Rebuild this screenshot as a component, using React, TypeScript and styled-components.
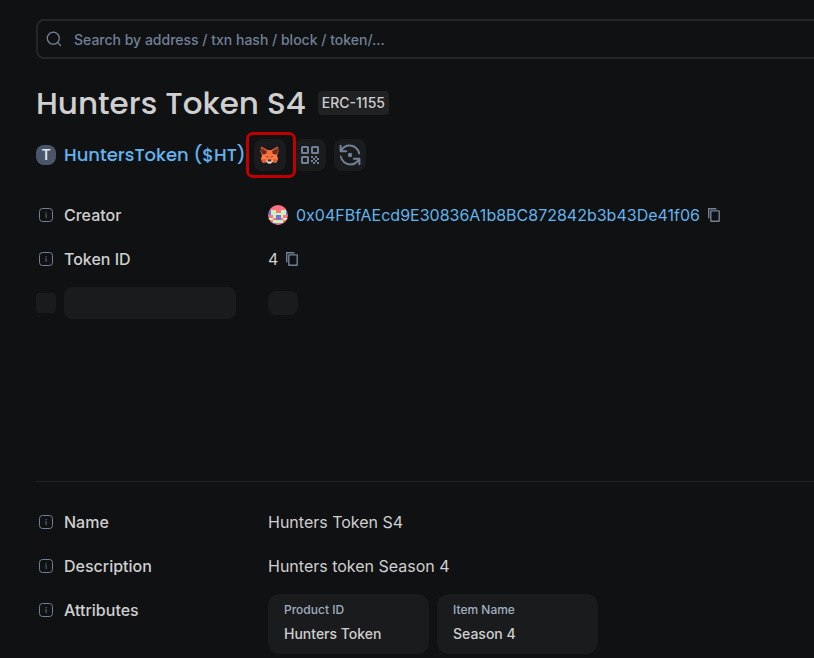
import React from 'react';
import styled, { createGlobalStyle } from 'styled-components';

const color = {
  page: '#101112',
  text: '#cfcfd0',
  muted: '#718096',
  link: '#63b3ed',
  panel: '#1a1b1c',
  line: '#212223',
  badge: '#202123',
};

const GlobalStyle = createGlobalStyle`
  * { box-sizing: border-box; }
  body {
    margin: 0;
    background: ${color.page};
    color: ${color.text};
    font-family: Inter, "Liberation Sans", sans-serif;
    font-size: 16px;
    line-height: 24px;
    font-weight: 400;
  }
  a { color: ${color.link}; text-decoration: none; }
  button { border: 0; padding: 0; background: none; color: ${color.muted}; cursor: pointer; }
  svg { display: block; flex: none; }
  h1, dl, dd, dt { margin: 0; }
`;

const Page = styled.main`
  padding: 19px 0 0 36px;
  overflow-x: hidden;
`;

const SearchBar = styled.label`
  display: flex;
  align-items: center;
  gap: 12px;
  height: 40px;
  padding-left: 8px;
  border: 2px solid #252627;
  border-right: 0;
  border-radius: 8px 0 0 8px;
  color: ${color.muted};
`;

const SearchInput = styled.input`
  flex: 1;
  min-width: 0;
  padding: 2px 0 0;
  border: 0;
  outline: 0;
  background: none;
  color: ${color.text};
  font: inherit;
  font-size: 14px;
  font-weight: 500;
  &::placeholder { color: ${color.muted}; opacity: 1; }
`;

const TitleRow = styled.div`
  display: flex;
  align-items: center;
  gap: 12px;
  margin-top: 24px;
`;

const Title = styled.h1`
  font-family: Poppins, Inter, sans-serif;
  font-size: 31px;
  line-height: 40px;
  font-weight: 500;
`;

const Badge = styled.span`
  padding: 0 4px;
  border-radius: 4px;
  background: ${color.badge};
  font-size: 14px;
  font-weight: 500;
`;

const TokenRow = styled.div`
  display: flex;
  align-items: center;
  gap: 8px;
  margin: 16px 0 28px;
`;

const TokenMark = styled.span`
  width: 20px;
  height: 20px;
  border-radius: 8px;
  background: #4a5568;
  color: #e2e8f0;
  font-size: 14px;
  line-height: 20px;
  font-weight: 600;
  text-align: center;
`;

const TokenLink = styled.a`
  font-family: Poppins, Inter, sans-serif;
  font-size: 18px;
  font-weight: 500;
`;

const ToolButton = styled.button`
  position: relative;
  display: grid;
  place-items: center;
  width: 32px;
  height: 32px;
  border-radius: 8px;
  background: ${color.panel};
`;

const Highlight = styled.span`
  position: absolute;
  z-index: 1;
  inset: -7px -10px -7px -8px;
  border: 3px solid #c00000;
  border-radius: 7px;
  pointer-events: none;
`;

const Details = styled.dl<{ $reserve?: number }>`
  display: grid;
  align-content: start;
  gap: 12px;
  min-height: ${({ $reserve }) => ($reserve ? `${$reserve}px` : 'auto')};
`;

const Row = styled.div`
  display: grid;
  grid-template-columns: 200px 1fr;
  column-gap: 32px;
`;

const Term = styled.dt`
  display: flex;
  align-items: center;
  gap: 8px;
  height: 32px;
  font-weight: 500;
`;

const Value = styled.dd`
  display: flex;
  align-items: center;
  gap: 8px;
  min-height: 32px;
`;

const Skeleton = styled.span<{ $w: number; $h: number; $r: number }>`
  width: ${({ $w }) => $w}px;
  height: ${({ $h }) => $h}px;
  border-radius: ${({ $r }) => $r}px;
  background: ${color.panel};
`;

const Divider = styled.hr`
  height: 1px;
  margin: 0 0 24px;
  border: 0;
  background: ${color.line};
`;

const Cards = styled.dd`
  display: grid;
  grid-template-columns: repeat(auto-fill, 161px);
  gap: 8px;
`;

const Card = styled.div`
  height: 60px;
  padding: 8px 16px;
  border-radius: 12px;
  background: ${color.panel};
`;

const CardLabel = styled.div`
  color: #a0aec0;
  font-size: 12px;
  line-height: 16px;
  font-weight: 500;
`;

const CardValue = styled.div`
  margin-top: 4px;
  font-size: 14px;
  line-height: 24px;
  font-weight: 500;
`;

const SearchIcon = () => (
  <svg width="16" height="16" viewBox="0 0 16 16" fill="none" stroke="currentColor" strokeWidth="1.3" strokeLinecap="round" aria-hidden="true">
    <circle cx="7.3" cy="7.2" r="6" />
    <path d="M11.7 11.6 14.6 14.5" />
  </svg>
);

const InfoIcon = () => (
  <svg width="20" height="20" viewBox="0 0 20 20" aria-hidden="true">
    <rect x="3.5" y="3.5" width="13" height="13" rx="3" fill="none" stroke={color.muted} />
    <path d="M9.5 7h1.2v1.3H9.5zM9 9.2h1.7V13H9.6V10H9z" fill={color.muted} opacity="0.75" />
  </svg>
);

const CopyIcon = () => (
  <svg width="12" height="16" viewBox="0 0 12 16" fill="none" stroke={color.muted} strokeWidth="1.4" aria-hidden="true">
    <path d="M.7 11.3V1.7H8.4" />
    <rect x="2.8" y="3.9" width="8.4" height="10.4" rx=".4" />
  </svg>
);

const CopyButton = ({ what }: { what: string }) => (
  <button type="button" aria-label={`Copy ${what}`}><CopyIcon /></button>
);

const FoxIcon = () => (
  <svg width="19" height="18" viewBox="0 0 38 36" aria-hidden="true">
    <path d="M2 1 15 8h8L36 1l1 10-3 8 2 8-4 7-7-2-3 3h-6l-3-3-7 2-4-7 2-8-3-8z" fill="#f4703a" />
    <path d="M3 3 14 10l-2 7-7 0-3-6zM35 3 24 10l2 7 7 0 3-6z" fill="#6b2a22" />
    <path d="m2 1 13 7-1 3L4 5zM36 1 23 8l1 3 10-6z" fill="#e2502c" />
    <path d="m5 18 9-2 3 9-5 4-10-2zM33 18l-9-2-3 9 5 4 10-2z" fill="#ff7d42" />
    <path d="m2 27 9-1 3 6-8 2zM36 27l-9-1-3 6 8 2z" fill="#e8592f" />
    <path d="m10 20 6 1-1 2zM28 20l-6 1 1 2z" fill="#5a2a26" />
    <path d="m12 28 4 1h6l4-1-1 4-4 3h-4l-4-3z" fill="#e4dbd5" />
    <path d="M16 27h6l1 4h-8z" fill="#4a3232" />
  </svg>
);

const QrIcon = () => (
  <svg width="18" height="18" viewBox="0 0 18 18" aria-hidden="true">
    <g fill="none" stroke={color.muted} strokeWidth="2">
      <rect x="1" y="1" width="6" height="6" rx=".5" />
      <rect x="11" y="1" width="6" height="6" rx=".5" />
      <rect x="1" y="11" width="6" height="6" rx=".5" />
    </g>
    <path d="M10 10h2v2h-2zM14 10h2v2h-2zM12 12h2v2h-2zM16 12h2v2h-2zM10 14h2v2h-2zM14 14h2v2h-2zM12 16h2v2h-2zM16 16h2v2h-2z" fill={color.muted} />
  </svg>
);

const RefreshIcon = () => (
  <svg width="22" height="22" viewBox="0 0 22 22" fill="none" stroke={color.muted} strokeWidth="2" strokeLinecap="round" strokeLinejoin="round" aria-hidden="true">
    <path d="M1.6 1.8v5.4h5.6M2.2 6.8C3.8 3.6 7 1.6 10.6 1.6c4.8 0 8.6 3.4 9.6 7.8" />
    <path d="M20.4 20.2v-5.4h-5.6M19.8 15.2c-1.6 3.2-4.8 5.2-8.4 5.2-4.8 0-8.6-3.4-9.6-7.8" />
    <circle cx="11" cy="11" r="2.2" fill={color.muted} stroke="none" />
  </svg>
);

const identicon = [
  'pppppppp',
  'pppppppp',
  'vggppggv',
  'vggggggv',
  'ppgvvgpp',
  'ggpvvpgg',
  'ppggggpp',
  'ppvppvpp',
];
const identiconFill: Record<string, string> = { p: '#ff7480', g: '#c9f2bd', v: '#7d6fd6' };

const Identicon = () => (
  <svg width="20" height="20" viewBox="0 0 8 8" shapeRendering="crispEdges" aria-hidden="true">
    <clipPath id="avatar"><circle cx="4" cy="4" r="4" /></clipPath>
    <g clipPath="url(#avatar)">
      {identicon.flatMap((line, y) =>
        line.split('').map((cell, x) => (
          <rect key={`${x}-${y}`} x={x} y={y} width="1" height="1" fill={identiconFill[cell]} />
        )),
      )}
    </g>
  </svg>
);

const DetailTerm = ({ children }: { children: React.ReactNode }) => (
  <Term><InfoIcon />{children}</Term>
);

const attributes = [
  { label: 'Product ID', value: 'Hunters Token' },
  { label: 'Item Name', value: 'Season 4' },
];

export default function App() {
  return (
    <>
      <GlobalStyle />
      <Page>
        <SearchBar>
          <SearchIcon />
          <SearchInput
            type="search"
            aria-label="Search"
            placeholder="Search by address / txn hash / block / token/..."
          />
        </SearchBar>

        <TitleRow>
          <Title>Hunters Token S4</Title>
          <Badge>ERC-1155</Badge>
        </TitleRow>

        <TokenRow>
          <TokenMark>T</TokenMark>
          <TokenLink href="#token">HuntersToken ($HT)</TokenLink>
          <ToolButton type="button" aria-label="Add token to MetaMask">
            <FoxIcon />
            <Highlight />
          </ToolButton>
          <ToolButton type="button" aria-label="Show QR code"><QrIcon /></ToolButton>
          <ToolButton type="button" aria-label="Refresh metadata"><RefreshIcon /></ToolButton>
        </TokenRow>

        <Details $reserve={282}>
          <Row>
            <DetailTerm>Creator</DetailTerm>
            <Value>
              <Identicon />
              <a href="#creator">0x04FBfAEcd9E30836A1b8BC872842b3b43De41f06</a>
              <CopyButton what="address" />
            </Value>
          </Row>
          <Row>
            <DetailTerm>Token ID</DetailTerm>
            <Value>4<CopyButton what="token ID" /></Value>
          </Row>
          <Row aria-hidden="true">
            <Term>
              <Skeleton $w={20} $h={20} $r={4} />
              <Skeleton $w={172} $h={32} $r={8} />
            </Term>
            <Value><Skeleton $w={30} $h={24} $r={8} /></Value>
          </Row>
        </Details>

        <Divider />

        <Details>
          <Row>
            <DetailTerm>Name</DetailTerm>
            <Value>Hunters Token S4</Value>
          </Row>
          <Row>
            <DetailTerm>Description</DetailTerm>
            <Value>Hunters token Season 4</Value>
          </Row>
          <Row>
            <DetailTerm>Attributes</DetailTerm>
            <Cards>
              {attributes.map(({ label, value }) => (
                <Card key={label}>
                  <CardLabel>{label}</CardLabel>
                  <CardValue>{value}</CardValue>
                </Card>
              ))}
            </Cards>
          </Row>
        </Details>
      </Page>
    </>
  );
}
